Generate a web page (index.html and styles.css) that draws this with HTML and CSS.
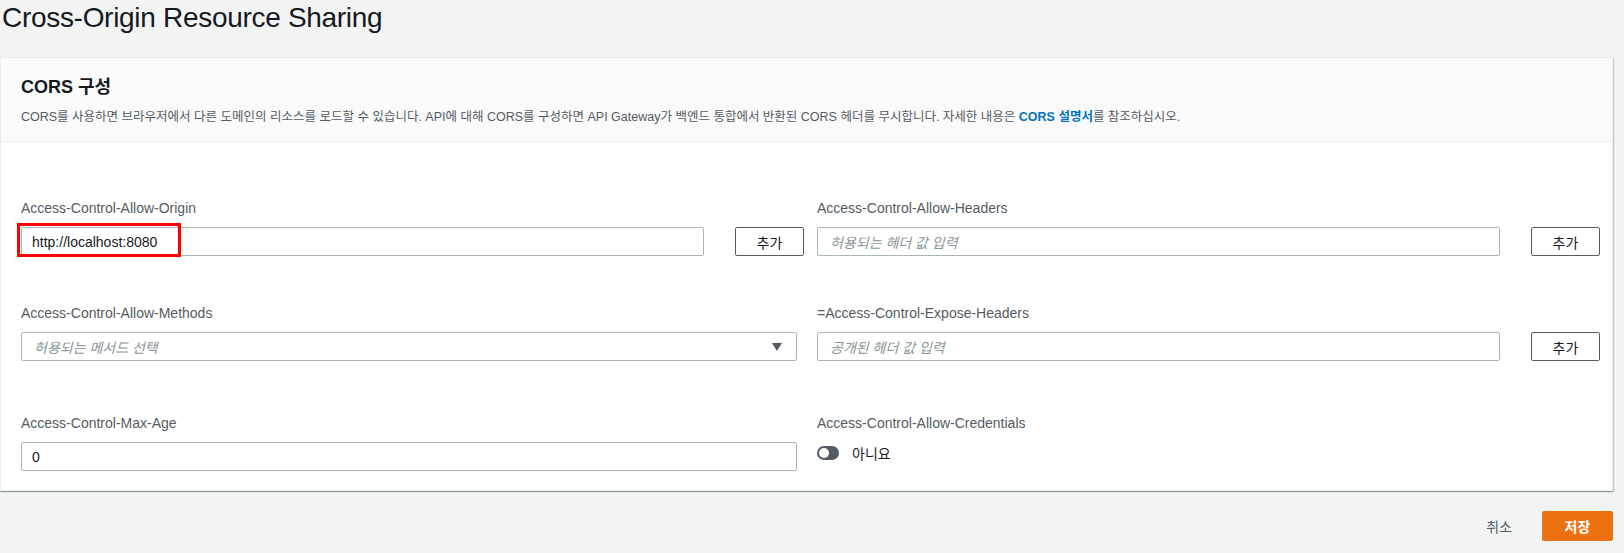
FILE: index.html
```html
<!DOCTYPE html>
<html lang="ko">
<head>
<meta charset="utf-8">
<title>Cross-Origin Resource Sharing</title>
<link rel="stylesheet" href="styles.css">
</head>
<body>
<div class="page">
  <h1 class="title">Cross-Origin Resource Sharing</h1>
  <div class="panel">
    <div class="panel-header">
      <h2 class="panel-title">CORS 구성</h2>
      <p class="panel-desc">CORS를 사용하면 브라우저에서 다른 도메인의 리소스를 로드할 수 있습니다. API에 대해 CORS를 구성하면 API Gateway가 백엔드 통합에서 반환된 CORS 헤더를 무시합니다. 자세한 내용은 <a class="link" href="#">CORS 설명서</a>를 참조하십시오.</p>
    </div>
    <div class="panel-body">
      <div class="field row-1">
        <div class="label">Access-Control-Allow-Origin</div>
        <div class="input-row">
          <div class="input-wrap">
            <div class="input">http://localhost:8080</div>
            <span class="highlight"></span>
          </div>
          <button class="btn">추가</button>
        </div>
      </div>
      <div class="field row-1">
        <div class="label">Access-Control-Allow-Headers</div>
        <div class="input-row">
          <div class="input-wrap">
            <div class="input placeholder">허용되는 헤더 값 입력</div>
          </div>
          <button class="btn">추가</button>
        </div>
      </div>
      <div class="field row-2">
        <div class="label">Access-Control-Allow-Methods</div>
        <div class="select">
          <span class="placeholder">허용되는 메서드 선택</span>
          <svg class="caret" width="10" height="8" viewBox="0 0 10 8"><path d="M0 0 H10 L5 8 Z" fill="#545b64"/></svg>
        </div>
      </div>
      <div class="field row-2">
        <div class="label">=Access-Control-Expose-Headers</div>
        <div class="input-row">
          <div class="input-wrap">
            <div class="input placeholder">공개된 헤더 값 입력</div>
          </div>
          <button class="btn">추가</button>
        </div>
      </div>
      <div class="field">
        <div class="label">Access-Control-Max-Age</div>
        <div class="input wide">0</div>
      </div>
      <div class="field">
        <div class="label">Access-Control-Allow-Credentials</div>
        <div class="toggle-row">
          <span class="toggle"><span class="knob"></span></span>
          <span class="toggle-label">아니요</span>
        </div>
      </div>
    </div>
  </div>
  <div class="footer">
    <button class="btn-link">취소</button>
    <button class="btn-primary">저장</button>
  </div>
</div>
</body>
</html>
```
FILE: styles.css
```css
* { box-sizing: border-box; }

html, body {
  margin: 0;
  padding: 0;
  background: #f2f3f3;
}

body {
  font-family: "Liberation Sans", "Noto Sans CJK KR", sans-serif;
  color: #16191f;
  font-size: 14px;
}

.page {
  width: 1613px;
}

.title {
  margin: 0;
  padding: 1px 0 0 2px;
  font-size: 28px;
  line-height: 34px;
  font-weight: normal;
  letter-spacing: -0.3px;
  color: #16191f;
}

.panel {
  margin-top: 22px;
  background: #fff;
  border: 1px solid #eaeded;
  box-shadow: 0 1px 1px 0 rgba(0, 28, 36, 0.3), 1px 1px 1px 0 rgba(0, 28, 36, 0.15);
}

.panel-header {
  background: #fafafa;
  border-bottom: 1px solid #eaeded;
  padding: 18px 20px 16px 20px;
}

.panel-title {
  margin: 0;
  font-size: 18px;
  line-height: 22px;
  font-weight: bold;
  color: #16191f;
}

.panel-desc {
  margin: 11px 0 0 0;
  font-size: 12.5px;
  line-height: 16px;
  color: #545b64;
}

.link {
  color: #0073bb;
  font-weight: bold;
  text-decoration: none;
}

.panel-body {
  padding: 56px 11px 19px 20px;
  display: grid;
  grid-template-columns: 784px 784px;
  column-gap: 12px;
}

.field.row-1 { margin-bottom: 47px; }
.field.row-2 { margin-bottom: 52px; }

.label {
  font-size: 14px;
  line-height: 20px;
  color: #545b64;
  margin-bottom: 9px;
}

.input-row {
  display: flex;
  gap: 31px;
  align-items: center;
}

.input-wrap {
  position: relative;
  width: 683px;
}

.input {
  height: 29px;
  border: 1px solid #aab7b8;
  border-radius: 2px;
  padding: 0 10px;
  display: flex;
  align-items: center;
  font-size: 14px;
  color: #16191f;
  background: #fff;
}

.input.wide {
  width: 776px;
}

.placeholder {
  font-style: italic;
  color: #879596;
}

.input.placeholder {
  padding-left: 12px;
}

.highlight {
  position: absolute;
  left: -4px;
  top: -4px;
  width: 164px;
  height: 34px;
  border: 3px solid #ff0000;
}

.btn {
  width: 69px;
  height: 29px;
  border: 1px solid #545b64;
  border-radius: 2px;
  background: #fff;
  color: #16191f;
  font-family: inherit;
  font-size: 14px;
  padding: 0;
}

.select {
  width: 776px;
  height: 29px;
  border: 1px solid #aab7b8;
  border-radius: 2px;
  padding: 0 14px 0 12px;
  display: flex;
  align-items: center;
  justify-content: space-between;
  font-size: 14px;
}

.toggle-row {
  display: flex;
  align-items: center;
  gap: 13px;
  height: 22px;
}

.toggle {
  width: 22px;
  height: 14px;
  border-radius: 7px;
  background: #545b64;
  position: relative;
  display: inline-block;
}

.knob {
  position: absolute;
  left: 2px;
  top: 2px;
  width: 10px;
  height: 10px;
  border-radius: 50%;
  background: #fff;
}

.toggle-label {
  font-size: 14px;
  color: #16191f;
}

.footer {
  display: flex;
  justify-content: flex-end;
  align-items: center;
  gap: 12px;
  margin-top: 20px;
}

.btn-link {
  border: none;
  background: transparent;
  font-family: inherit;
  font-size: 14px;
  color: #545b64;
  padding: 0 18px;
  height: 30px;
}

.btn-primary {
  width: 71px;
  height: 30px;
  border: 1px solid #ec7211;
  border-radius: 2px;
  background: #ec7211;
  color: #fff;
  font-family: inherit;
  font-size: 14px;
  font-weight: bold;
  padding: 0;
}
```
